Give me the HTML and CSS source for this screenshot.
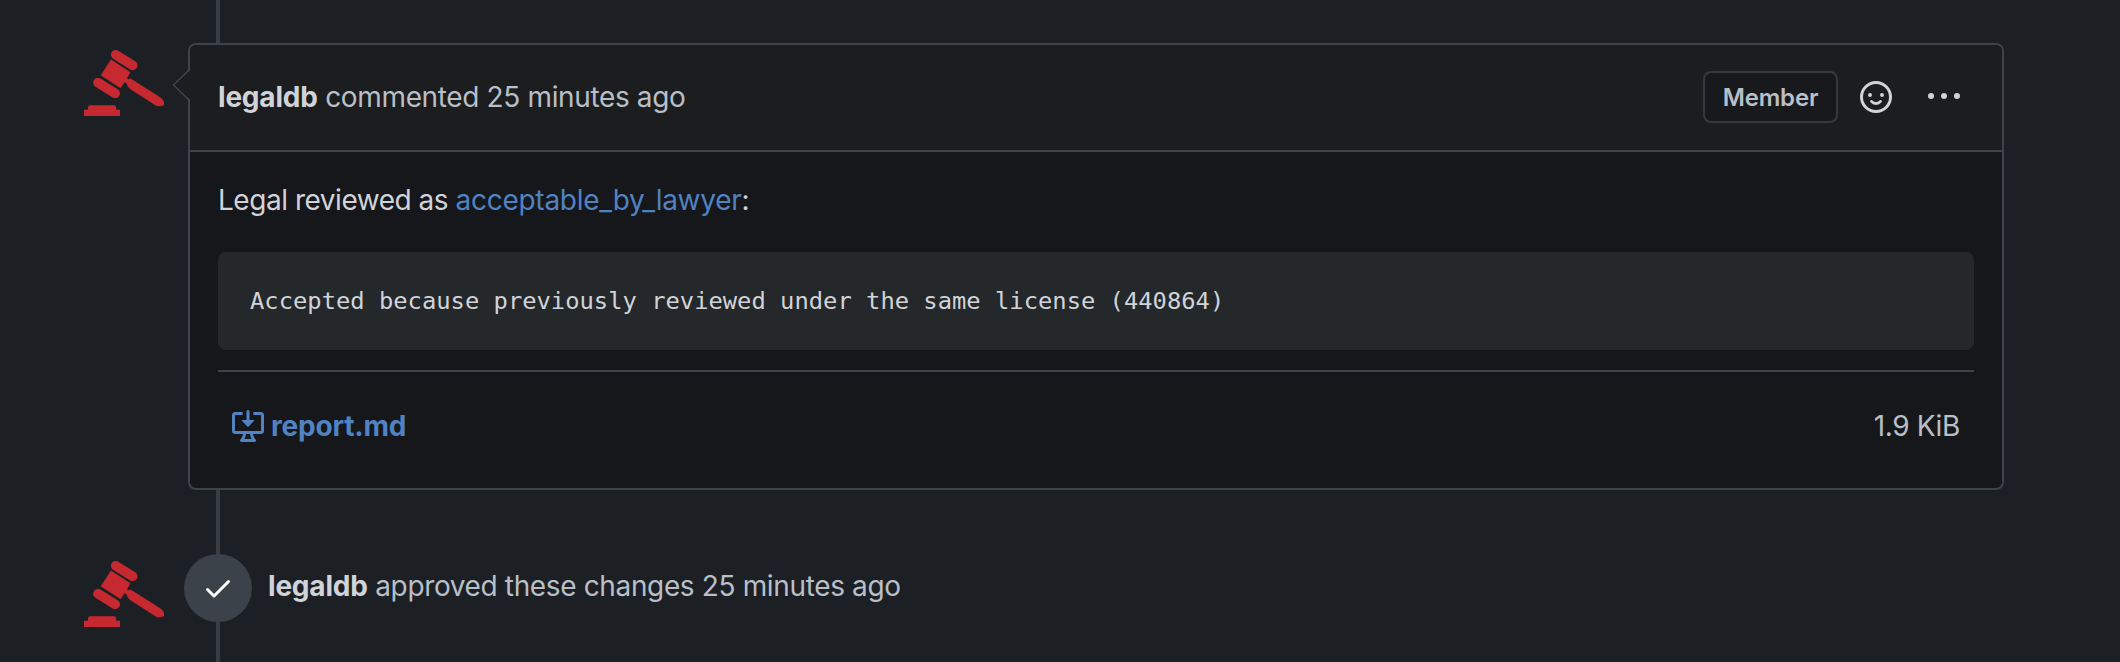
FILE: index.html
```html
<!DOCTYPE html>
<html lang="en">
<head>
<meta charset="utf-8">
<title>Review timeline</title>
<link rel="stylesheet" href="styles.css">
</head>
<body>
<svg class="defs" aria-hidden="true">
  <symbol id="gavel" viewBox="0 0 80 80">
    <g fill="#c6292f">
      <path d="M31.700 11.700 48.700 22.400M14 39.700 31.200 50.300" fill="none" stroke="#c6292f" stroke-width="9.600" stroke-linecap="round"/>
      <path d="M27 16.700 46.200 29.300 42.800 35.200 44 36.400 46.700 35.800 75.500 54Q80 57 80 60V62Q77.500 63.600 72.500 62.800L46 45.800Q43.500 44 42.700 40.300L40.400 39 36.600 45 16.900 32.300Z" stroke="#c6292f" stroke-width=".4"/>
      <path d="M0 66.700H4V64.300Q4.200 62.300 6.200 62.300H30Q32 62.300 32.200 64.300V66.700H36V73H0Z"/>
    </g>
  </symbol>
</svg>
<main class="timeline">
  <article class="comment">
    <svg class="avatar"><use href="#gavel"/></svg>
    <section class="card">
      <svg class="caret" viewBox="0 0 20 36"><path d="M20 1.500 2 18 20 34.500" fill="#1c1d1f"/><path d="M18 2 1.500 18 18 34" fill="none" stroke="#3c434a" stroke-width="1.500"/></svg>
      <header class="card-header">
        <p class="summary"><strong>legaldb</strong> commented 25 minutes ago</p>
        <span class="badge">Member</span>
        <svg class="icon smiley" viewBox="0 0 16 16"><g fill="none" stroke="currentColor" stroke-linecap="round"><circle cx="8" cy="8" r="7.250" stroke-width="1.500"/><path d="M5.750 10.200Q6.600 11.250 8 11.250T10.250 10.200" stroke-width="1.400"/></g><g fill="currentColor"><circle cx="5" cy="7" r="1"/><circle cx="11" cy="7" r="1"/></g></svg>
        <svg class="icon kebab" viewBox="0 0 32 32"><g fill="currentColor"><circle cx="3" cy="15" r="3"/><circle cx="16" cy="15" r="3"/><circle cx="29" cy="15" r="3"/></g></svg>
      </header>
      <div class="card-body">
        <p class="review">Legal reviewed as <a>acceptable_by_lawyer</a>:</p>
        <pre class="code">Accepted because previously reviewed under the same license (440864)</pre>
        <div class="attachment">
          <svg class="icon" viewBox="0 0 16 16" fill="currentColor"><path d="m4.927 5.427 2.896 2.896a.25.25 0 0 0 .354 0l2.896-2.896A.25.25 0 0 0 10.896 5H8.750V.750a.75.75 0 1 0-1.500 0V5H5.104a.25.25 0 0 0-.177.427Z"/><path d="M1.573 2.573a.25.25 0 0 0-.073.177v7.500a.25.25 0 0 0 .25.25h12.500a.25.25 0 0 0 .25-.25v-7.500a.25.25 0 0 0-.25-.25h-3a.75.75 0 1 1 0-1.500h3A1.750 1.750 0 0 1 16 2.750v7.500A1.750 1.750 0 0 1 14.250 12h-3.727c.099 1.041.52 1.872 1.292 2.757A.75.75 0 0 1 11.250 16h-6.500a.75.75 0 0 1-.565-1.243c.772-.885 1.192-1.716 1.292-2.757H1.750A1.750 1.750 0 0 1 0 10.250v-7.500A1.750 1.750 0 0 1 1.750 1h3a.75.75 0 0 1 0 1.500h-3a.25.25 0 0 0-.177.073ZM6.982 12a5.720 5.720 0 0 1-.765 2.500h3.566a5.720 5.720 0 0 1-.765-2.500Z"/></svg>
          <a class="filename">report.md</a>
          <span class="filesize">1.9 KiB</span>
        </div>
      </div>
    </section>
  </article>
  <div class="event">
    <svg class="avatar"><use href="#gavel"/></svg>
    <span class="status"><svg class="icon" viewBox="0 0 16 16" fill="currentColor"><path d="M13.780 4.220a.75.75 0 0 1 0 1.060l-7.250 7.250a.75.75 0 0 1-1.060 0L2.220 9.280a.751.751 0 0 1 .018-1.042.751.751 0 0 1 1.042-.018L6 10.940l6.720-6.720a.75.75 0 0 1 1.060 0Z"/></svg></span>
    <p class="event-text"><strong>legaldb</strong> approved these changes 25 minutes ago</p>
  </div>
</main>
</body>
</html>
```
FILE: styles.css
```css
* { box-sizing: border-box; }
body {
  margin: 0;
  background: #1c2025;
  color: #b8bfc7;
  font: 28px/42px Inter, "Liberation Sans", sans-serif;
  letter-spacing: -0.36px;
}
p, pre { margin: 0; white-space: nowrap; }
strong { color: #d1d3d8; font-weight: 700; letter-spacing: -0.2px; }
a { color: #5182c2; }
.defs { position: absolute; width: 0; height: 0; }
.timeline {
  height: 662px;
  padding: 43px 0 0 84px;
  overflow: hidden;
  background: linear-gradient(#373e46, #373e46) 216px 0 / 4px 100% no-repeat;
}
.avatar { width: 80px; height: 80px; flex: none; }
.icon { width: 32px; height: 32px; flex: none; display: block; }
.comment { display: flex; gap: 24px; }
.card {
  position: relative;
  width: 1816px;
  height: 447px;
  border: 2px solid #3c434a;
  border-radius: 8px;
  background: #15171a;
}
.caret { position: absolute; left: -18px; top: 22px; width: 20px; height: 36px; }
.card-header {
  display: flex;
  align-items: center;
  height: 107px;
  padding: 0 42px 2px 28px;
  background: #1c1d1f;
  border-bottom: 2px solid #3c434a;
  border-radius: 6px 6px 0 0;
  color: #b8bfc7;
}
.summary { flex: 1; }
.badge {
  width: 135px;
  height: 52px;
  border: 2px solid #36383e;
  border-radius: 8px;
  background: #18191d;
  font-size: 24px;
  line-height: 49px;
  font-weight: 600;
  letter-spacing: -0.2px;
  text-align: center;
}
.smiley { margin-left: 22px; color: #d1d3d8; }
.kebab { margin-left: 36px; color: #d1d3d8; }
.card-body { padding: 27px 28px 0; }
.review { color: #d1d3d8; letter-spacing: -0.47px; }
.review a { letter-spacing: -0.28px; }
.code {
  height: 98px;
  margin: 31px 0 20px;
  padding: 0 32px;
  border-radius: 8px;
  background: #24282b;
  color: #d1d3d8;
  font: 23.8px/98px "DejaVu Sans Mono", monospace;
  letter-spacing: 0;
}
.attachment {
  display: flex;
  align-items: center;
  height: 110px;
  padding: 0 14px;
  border-top: 2px solid #3c434a;
  color: #5182c2;
}
.filename { margin-left: 7px; font-weight: 700; letter-spacing: -0.2px; }
.filesize { margin-left: auto; color: #b8bfc7; }
.event { display: flex; align-items: center; margin-top: 58px; }
.event .avatar { margin-top: 6px; }
.status {
  display: grid;
  place-items: center;
  width: 68px;
  height: 68px;
  margin: 0 16px 6px 20px;
  border-radius: 50%;
  background: #3b424a;
  color: #fff;
}
.event-text { margin-bottom: 10px; }
```
